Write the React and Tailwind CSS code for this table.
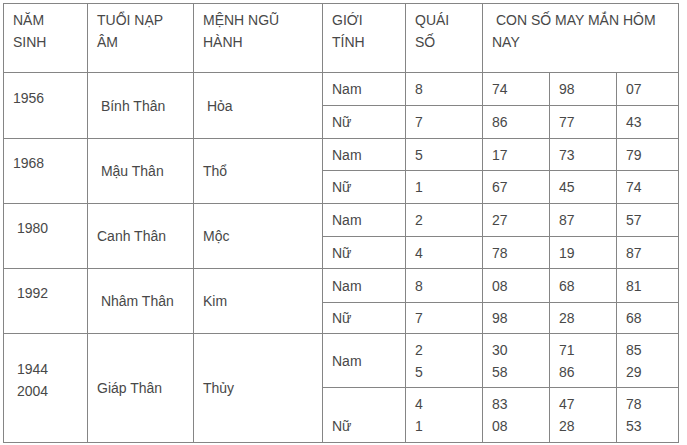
import React from 'react';

const sp = '\u00a0';

// each group: year cell, nap am, menh, then two rows (Nam / Nữ)
const groups = [
  {
    year: '1956', tuoi: sp + 'Bính Thân', menh: sp + 'Hỏa', heights: ['h-[33px]', 'h-[33px]'],
    rows: [
      { gt: 'Nam', qs: ['8'], nums: [['74'], ['98'], ['07']] },
      { gt: 'Nữ', qs: ['7'], nums: [['86'], ['77'], ['43']] },
    ],
  },
  {
    year: '1968', tuoi: sp + 'Mậu Thân', menh: 'Thổ', heights: ['h-[32px]', 'h-[33px]'],
    rows: [
      { gt: 'Nam', qs: ['5'], nums: [['17'], ['73'], ['79']] },
      { gt: 'Nữ', qs: ['1'], nums: [['67'], ['45'], ['74']] },
    ],
  },
  {
    year: sp + '1980', tuoi: 'Canh Thân', menh: 'Mộc', heights: ['h-[33px]', 'h-[32px]'],
    rows: [
      { gt: 'Nam', qs: ['2'], nums: [['27'], ['87'], ['57']] },
      { gt: 'Nữ', qs: ['4'], nums: [['78'], ['19'], ['87']] },
    ],
  },
  {
    year: sp + '1992', tuoi: sp + 'Nhâm Thân', menh: 'Kim', heights: ['h-[34px]', 'h-[31px]'],
    rows: [
      { gt: 'Nam', qs: ['8'], nums: [['08'], ['68'], ['81']] },
      { gt: 'Nữ', qs: ['7'], nums: [['98'], ['28'], ['68']] },
    ],
  },
];

function Lines({ items }) {
  return items.map((t, i) => (
    <React.Fragment key={i}>
      {i > 0 && <br />}
      {t}
    </React.Fragment>
  ));
}

const cell = 'border border-[#858585] pl-[9px] pr-1 py-0 align-middle';

export default function App() {
  return (
    <div className="min-h-screen bg-white pl-[3px] pt-[3px]">
      <table
        className="table-fixed border-collapse w-[675px] text-[14px] leading-[22px] text-[#484848]"
        style={{ fontFamily: '"Liberation Sans", Arial, sans-serif' }}
      >
        <colgroup>
          <col className="w-[84px]" />
          <col className="w-[106px]" />
          <col className="w-[129px]" />
          <col className="w-[83px]" />
          <col className="w-[77px]" />
          <col className="w-[67px]" />
          <col className="w-[67px]" />
          <col className="w-[62px]" />
        </colgroup>
        <tbody>
          {/* Header */}
          <tr className="h-[69px]">
            <td className={`${cell} !align-top pt-[5px]`}>NĂM<br />SINH</td>
            <td className={`${cell} !align-top pt-[5px]`}>TUỔI NẠP<br />ÂM</td>
            <td className={`${cell} !align-top pt-[5px]`}>MỆNH NGŨ<br />HÀNH</td>
            <td className={`${cell} !align-top pt-[5px]`}>GIỚI<br />TÍNH</td>
            <td className={`${cell} !align-top pt-[5px]`}>QUÁI<br />SỐ</td>
            <td colSpan={3} className={`${cell} !align-top pt-[5px]`}>
              {sp}CON SỐ MAY MẮN HÔM<br />NAY
            </td>
          </tr>

          {groups.map((g) =>
            g.rows.map((r, i) => (
              <tr key={g.year + i} className={g.heights[i]}>
                {i === 0 && (
                  <>
                    <td rowSpan={2} className={`${cell} pb-[16px]`}>{g.year}</td>
                    <td rowSpan={2} className={cell}>{g.tuoi}</td>
                    <td rowSpan={2} className={cell}>{g.menh}</td>
                  </>
                )}
                <td className={cell}>{r.gt}</td>
                <td className={cell}><Lines items={r.qs} /></td>
                {r.nums.map((n, j) => (
                  <td key={j} className={cell}><Lines items={n} /></td>
                ))}
              </tr>
            ))
          )}

          {/* Giáp Thân - hai năm */}
          <tr className="h-[54px]">
            <td rowSpan={2} className={`${cell} pb-[16px]`}>{sp}1944<br />{sp}2004</td>
            <td rowSpan={2} className={cell}>Giáp Thân</td>
            <td rowSpan={2} className={cell}>Thủy</td>
            <td className={cell}>Nam</td>
            <td className={cell}>2<br />5</td>
            <td className={cell}>30<br />58</td>
            <td className={cell}>71<br />86</td>
            <td className={cell}>85<br />29</td>
          </tr>
          <tr className="h-[55px]">
            <td className={cell}><br />Nữ</td>
            <td className={cell}>4<br />1</td>
            <td className={cell}>83<br />08</td>
            <td className={cell}>47<br />28</td>
            <td className={cell}>78<br />53</td>
          </tr>
        </tbody>
      </table>
    </div>
  );
}
